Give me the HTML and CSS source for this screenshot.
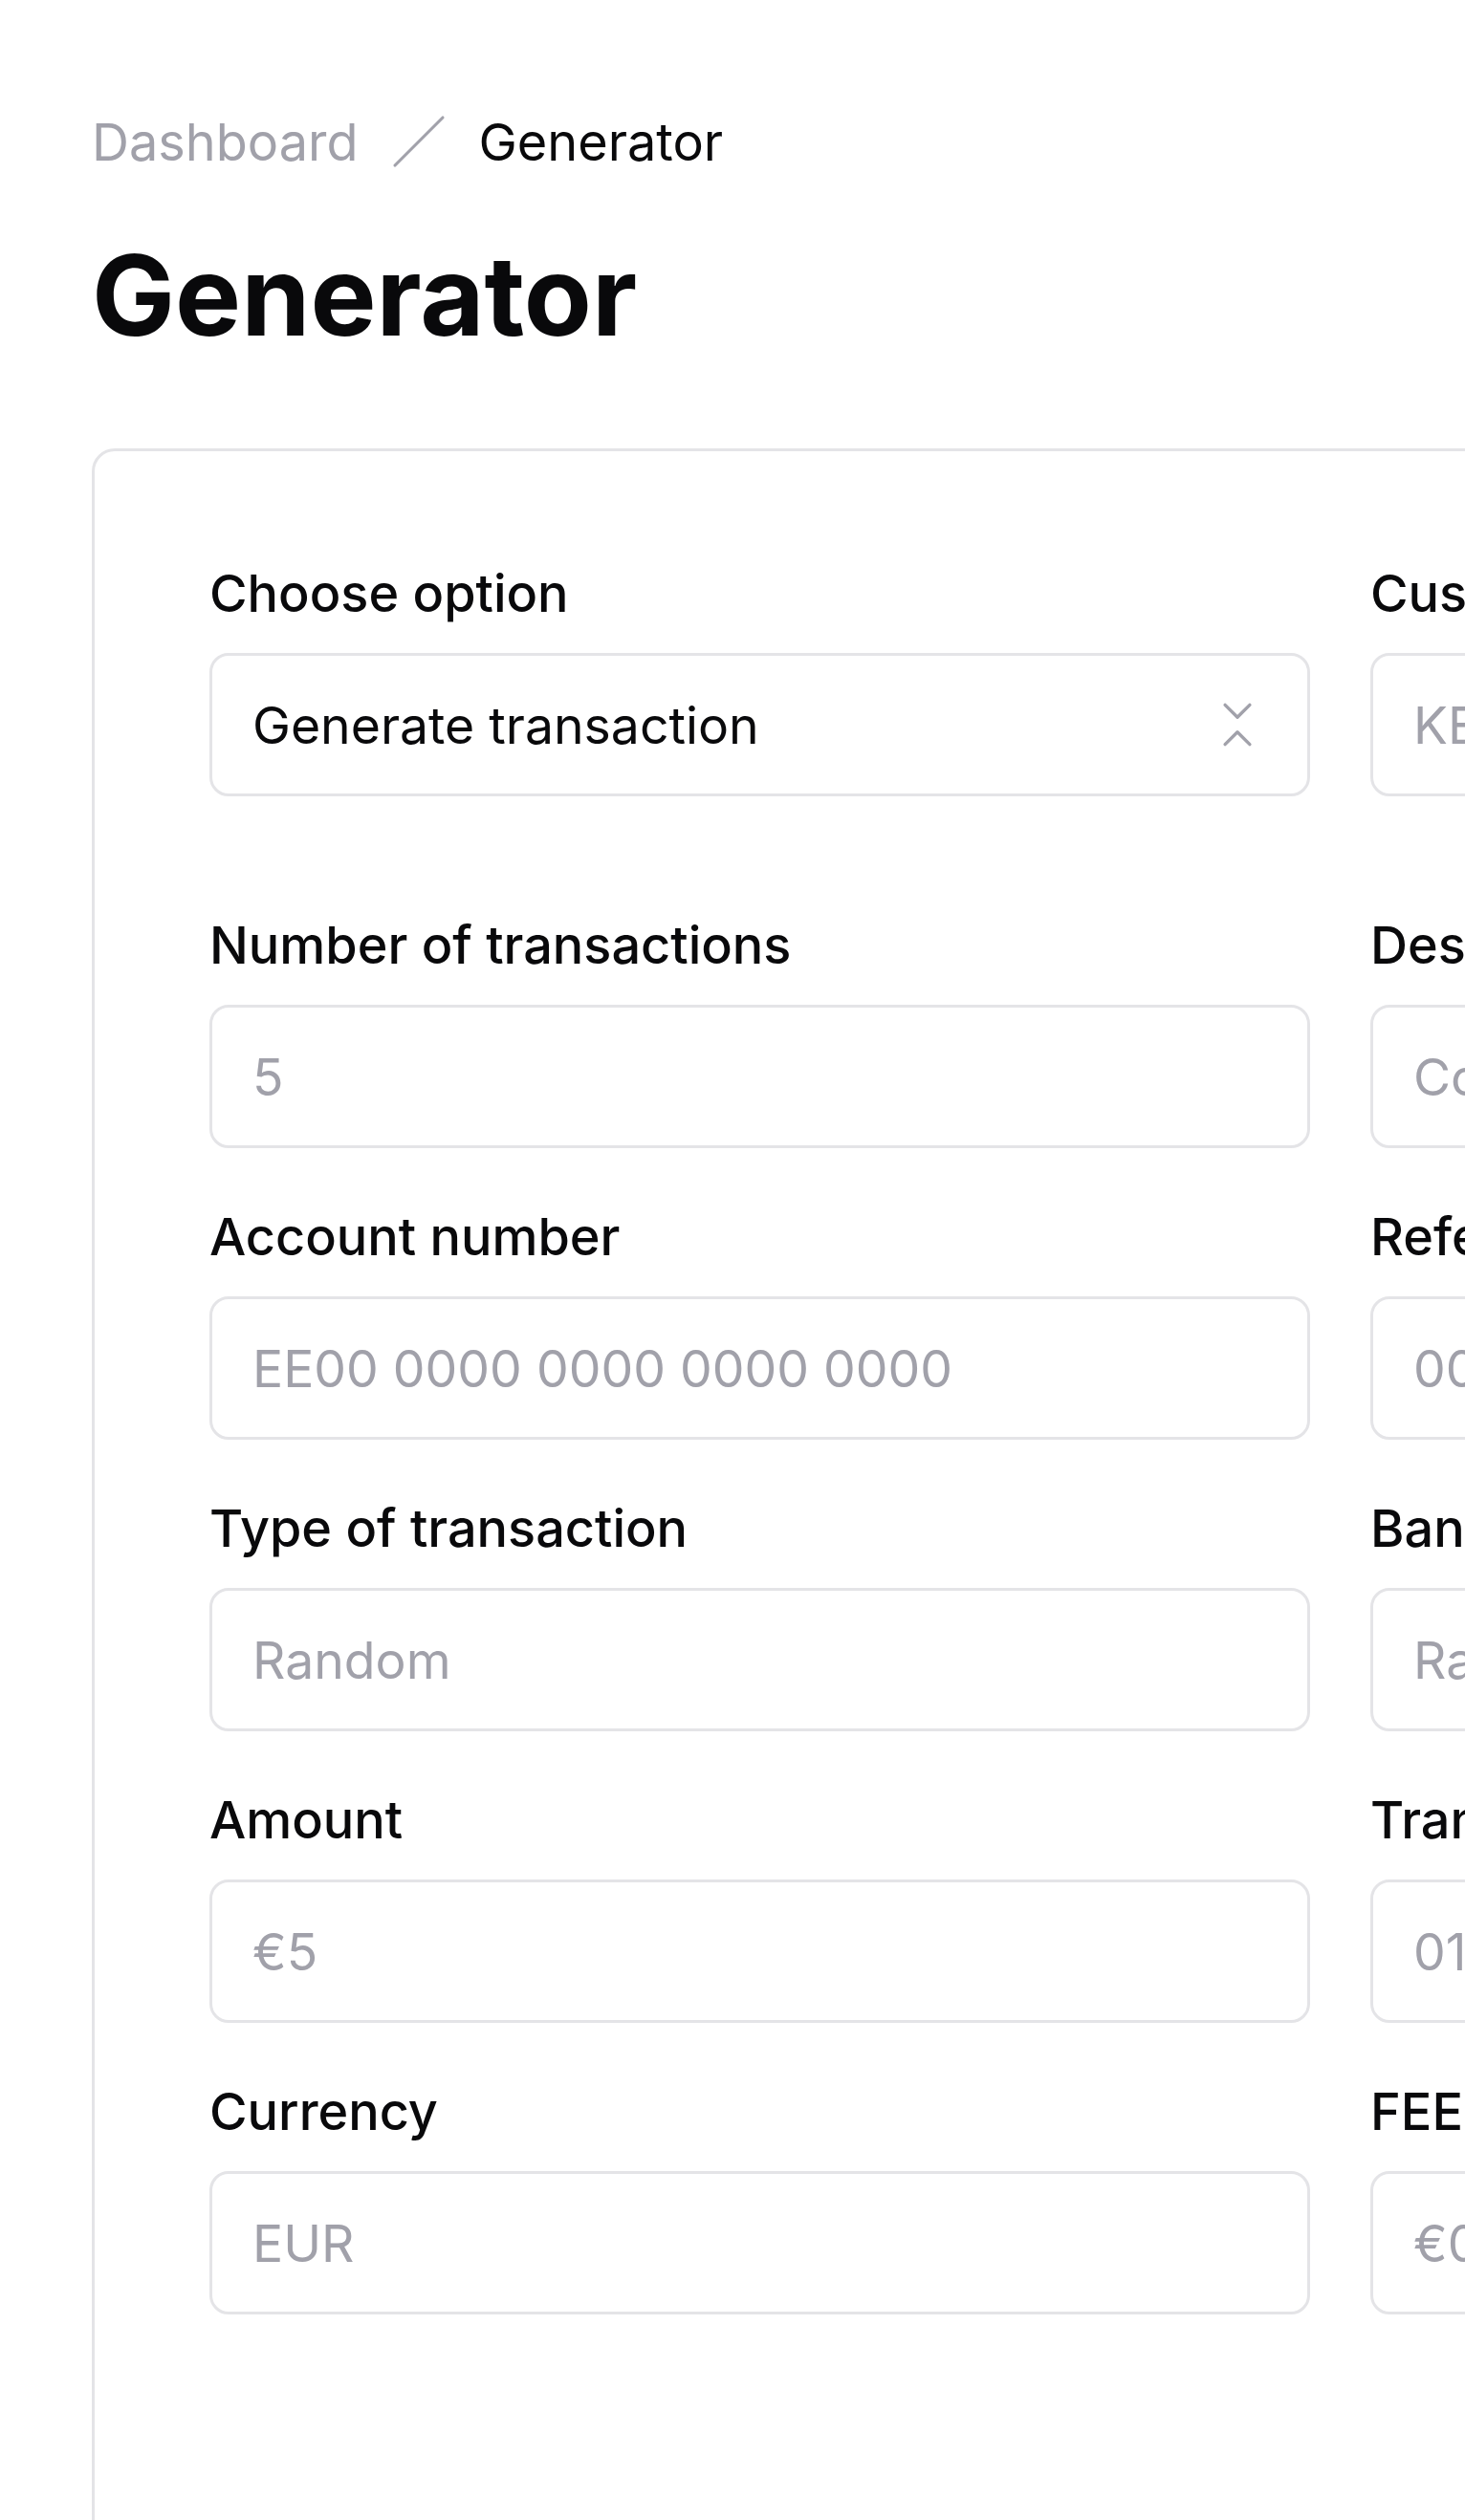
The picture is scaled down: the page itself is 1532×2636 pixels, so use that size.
FILE: index.html
```html
<!DOCTYPE html>
<html lang="en">
<head>
    <meta charset="UTF-8">
    <meta name="viewport" content="width=device-width, initial-scale=1.0">
    <title>Generator</title>
    <link rel="stylesheet" href="styles.css">
</head>
<body>
    <main class="page">
        <nav class="breadcrumb">
            <a href="#" class="crumb-link">Dashboard</a>
            <svg class="crumb-sep" viewBox="0 0 24 24" fill="none" stroke="currentColor" stroke-width="1.25" stroke-linecap="round" stroke-linejoin="round">
                <path d="M22 2 2 22"/>
            </svg>
            <span class="crumb-current">Generator</span>
        </nav>

        <h1 class="title">Generator</h1>

        <div class="card">
            <form class="form-grid">
                <div class="field top-row">
                    <label>Choose option</label>
                    <button type="button" class="select">
                        <span>Generate transaction</span>
                        <svg class="select-icon" viewBox="0 0 24 24" fill="none" stroke="currentColor" stroke-width="1.3" stroke-linecap="round" stroke-linejoin="round">
                            <path d="m7 20 5-5 5 5"/>
                            <path d="m7 4 5 5 5-5"/>
                        </svg>
                    </button>
                </div>
                <div class="field top-row">
                    <label>Customer name</label>
                    <input type="text" placeholder="KEVIN SMITH">
                </div>

                <div class="field">
                    <label>Number of transactions</label>
                    <input type="text" placeholder="5">
                </div>
                <div class="field">
                    <label>Description</label>
                    <input type="text" placeholder="Comment">
                </div>

                <div class="field">
                    <label>Account number</label>
                    <input type="text" placeholder="EE00 0000 0000 0000 0000">
                </div>
                <div class="field">
                    <label>Reference number</label>
                    <input type="text" placeholder="0000000000">
                </div>

                <div class="field">
                    <label>Type of transaction</label>
                    <input type="text" placeholder="Random">
                </div>
                <div class="field">
                    <label>Bank</label>
                    <input type="text" placeholder="Random">
                </div>

                <div class="field">
                    <label>Amount</label>
                    <input type="text" placeholder="€5">
                </div>
                <div class="field">
                    <label>Transaction date</label>
                    <input type="text" placeholder="01.01.2024">
                </div>

                <div class="field">
                    <label>Currency</label>
                    <input type="text" placeholder="EUR">
                </div>
                <div class="field">
                    <label>FEE</label>
                    <input type="text" placeholder="€0">
                </div>
            </form>
        </div>
    </main>
</body>
</html>
```

FILE: styles.css
```css
* {
    margin: 0;
    box-sizing: border-box;
}
html, body {
    overflow: hidden;
}
body {
    font-family: Inter, "Liberation Sans", sans-serif;
    color: #09090b;
    background: #ffffff;
}
.page {
    padding: 118px 0 0 96px;
}
.breadcrumb {
    display: flex;
    align-items: center;
    gap: 33px;
    height: 60px;
    font-size: 54px;
}
.crumb-link {
    color: #a1a1aa;
    text-decoration: none;
}
.crumb-sep {
    width: 60px;
    height: 60px;
    color: #a1a1aa;
}
.crumb-current {
    color: #09090b;
}
.title {
    margin-top: 64px;
    font-size: 116px;
    line-height: 134px;
    font-weight: 700;
}
.card {
    width: max-content;
    margin-top: 93px;
    border: 3px solid #e4e4e7;
    border-radius: 24px;
    padding: 122px 120px 320px;
    background: #fff;
}
.form-grid {
    display: grid;
    grid-template-columns: repeat(2, 1151px);
    column-gap: 63px;
    row-gap: 66px;
}
.field {
    display: flex;
    flex-direction: column;
    gap: 35px;
}
.field.top-row {
    margin-bottom: 63px;
}
.field label {
    font-size: 54px;
    font-weight: 500;
    line-height: 54px;
}
.field input,
.select {
    width: 100%;
    height: 150px;
    border: 3px solid #e4e4e7;
    border-radius: 20px;
    padding: 0 42px;
    background: #fff;
    font-family: inherit;
    font-size: 53.5px;
    color: #09090b;
    outline: none;
}
.field input::placeholder {
    color: #a1a1aa;
}
.select {
    display: flex;
    align-items: center;
    justify-content: space-between;
    text-align: left;
    cursor: pointer;
}
.select-icon {
    width: 62px;
    height: 62px;
    color: #a1a1aa;
    flex-shrink: 0;
}
```
